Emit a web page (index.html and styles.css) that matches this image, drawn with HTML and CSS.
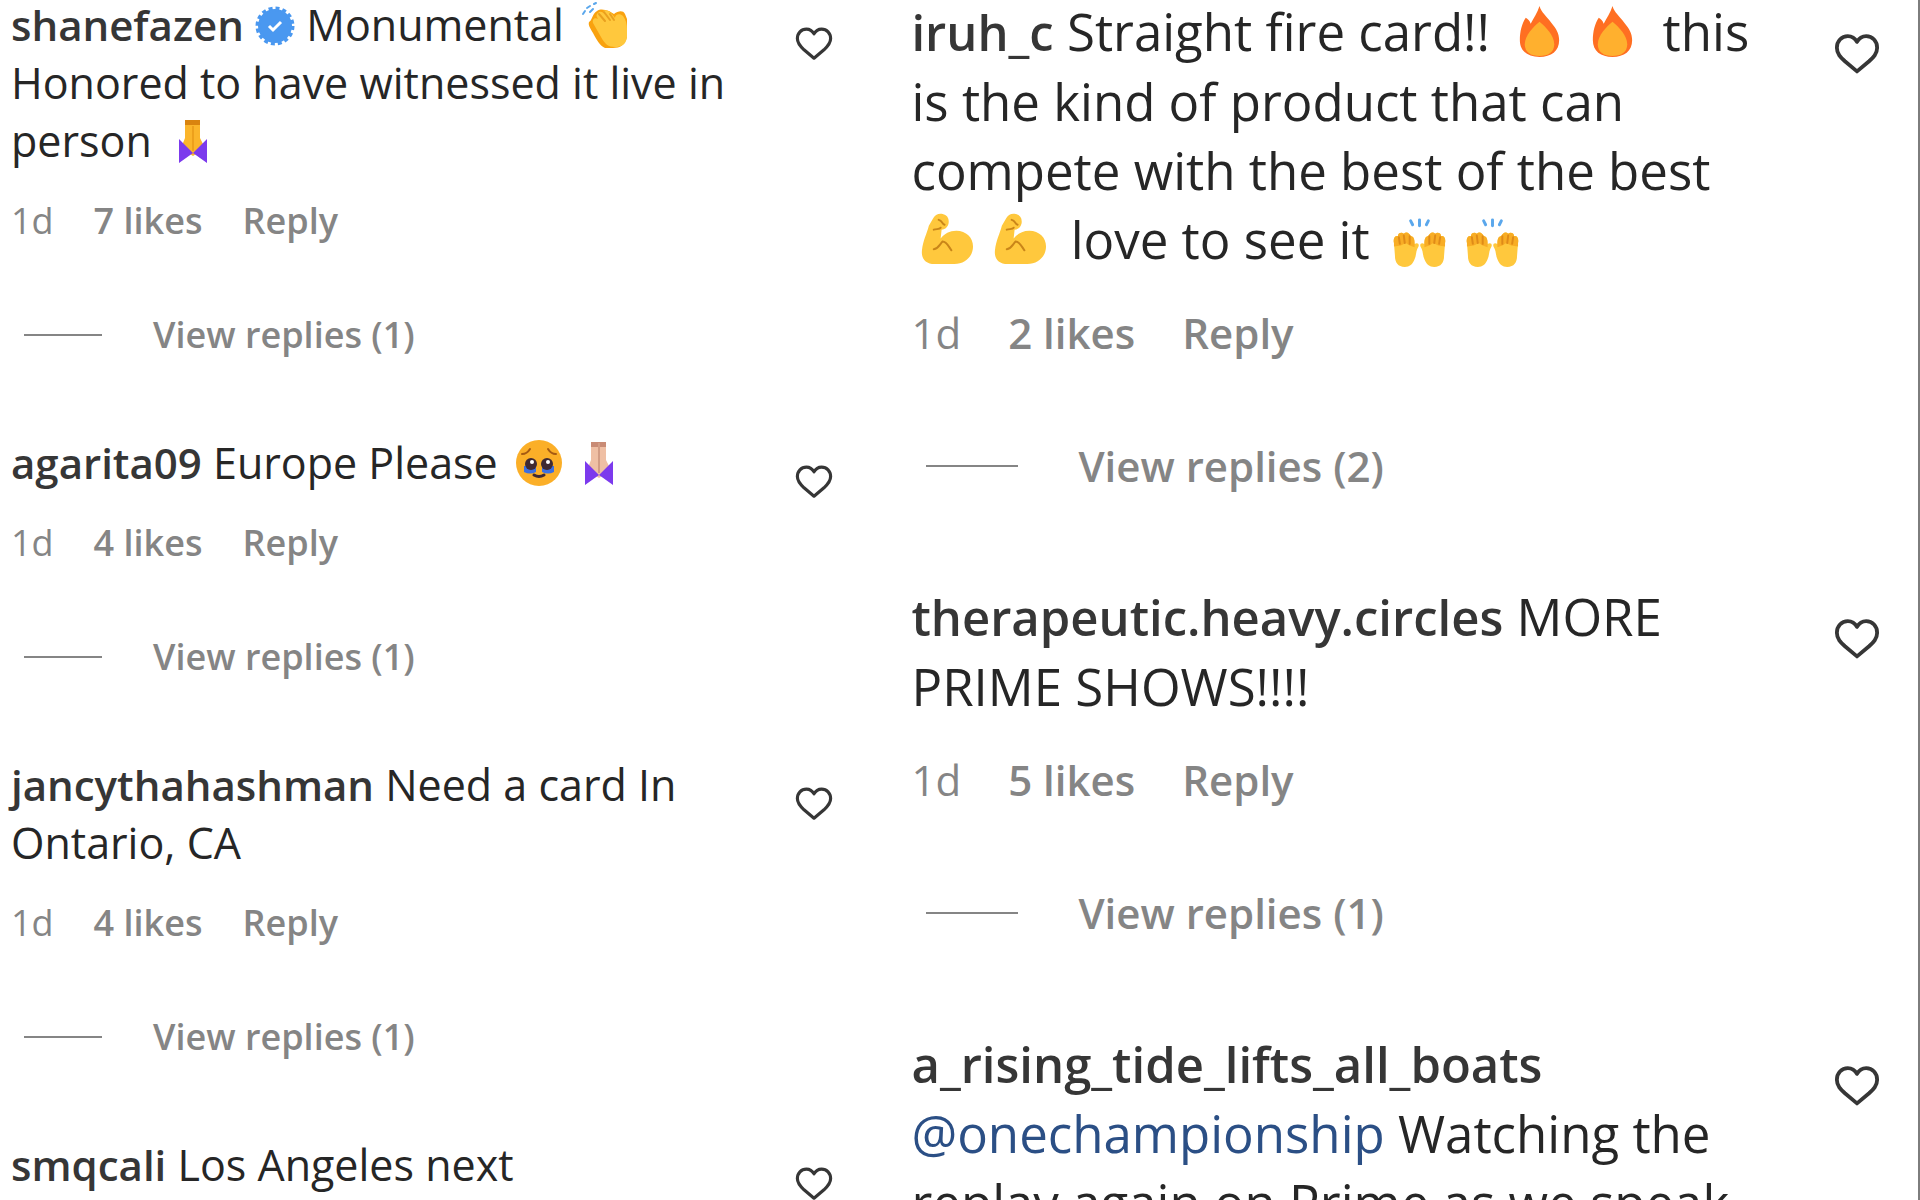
FILE: index.html
```html
<!DOCTYPE html>
<html lang="en">
<head>
  <meta charset="UTF-8">
  <meta name="viewport" content="width=device-width, initial-scale=1.0">
  <title>Comments</title>
  <link rel="stylesheet" href="styles.css">
</head>
<body>
  <!-- shared icons -->
  <svg class="sprite" aria-hidden="true">
    <symbol id="heart" viewBox="0 0 24 24">
      <path d="M16.8 3.2c-2.2 0-3.8 1.2-4.8 3-1-1.8-2.6-3-4.8-3C3.900 3.200 1.500 5.800 1.500 9.200c0 3.200 2 5.100 4.200 7.100l6.300 5.300 6.300-5.300c2.200-2 4.200-3.900 4.200-7.100 0-3.400-2.400-6-5.700-6z" fill="none" stroke="#363636" stroke-width="2" stroke-linejoin="round"/>
    </symbol>
    <symbol id="verified" viewBox="0 0 40 40">
      <circle cx="20" cy="20" r="17" fill="#4a98f0" stroke="#4a98f0" stroke-width="5" stroke-dasharray="3.8 2.875"/>
      <path d="M14 20l4 4 8-8" fill="none" stroke="#fff" stroke-width="3"/>
    </symbol>
    <symbol id="clap" viewBox="0 0 48 48">
      <path d="M2 13l2-3M6 7l3-2M9 11l3-3M13 3l2-1" stroke="#5aa7ec" stroke-width="2" stroke-linecap="round"/>
      <path d="M16 10c4-3 8-1 12 0l5 3c4-3 9-4 11 0l2 5v18c-2 8-7 11-14 11h-8c-5-2-9-9-12-15-3-5-5-8-4-11 3-1 3-8 8-11z" fill="#f9a20f"/>
      <path d="M17 12c3-3 5 0 8 2l-3-4c3-2 6 0 9 3l3 4c0-4 5-5 8-2 3 4 4 8 4 13v8c-1 8-6 10-12 10-7 0-10-3-14-10l-8-14c-1-4 2-6 5-4-2-3-2-5 0-6z" fill="#ffc83d"/>
      <path d="M18 13l6 7M23 11l6 8M29 13l4 6" fill="none" stroke="#e9a01f" stroke-width="2" stroke-linecap="round"/>
    </symbol>
    <symbol id="pray" viewBox="0 0 48 48">
      <path d="M16 3h15v18l5 10-12 8-12-8 4-10z" fill="#fbb52b"/>
      <path d="M16 3h15v5H16z" fill="#d9840f"/>
      <path d="M24 9v25" stroke="#eda01c" stroke-width="2"/>
      <path d="M10 22l14 14 14-14v24L24 36 10 46z" fill="#7c3aed"/>
    </symbol>
    <symbol id="pray-light" viewBox="0 0 48 48">
      <path d="M16 3h15v18l5 10-12 8-12-8 4-10z" fill="#efbfa4"/>
      <path d="M16 3h15v5H16z" fill="#c98b75"/>
      <path d="M24 4v30" stroke="#d29c84" stroke-width="2"/>
      <path d="M10 22l14 14 14-14v24L24 36 10 46z" fill="#7c3aed"/>
    </symbol>
    <symbol id="tears" viewBox="0 0 48 48">
      <circle cx="24" cy="24" r="23" fill="#fbaf28"/>
      <path d="M7 15q5 0 8-5M41 15q-5 0-8-5" fill="none" stroke="#a55a12" stroke-width="2" stroke-linecap="round"/>
      <path d="M9 27h12v6c-4 2-8 2-12 0zM27 27h12v6c-4 2-8 2-12 0z" fill="#3c6fe0"/>
      <circle cx="16" cy="25" r="6" fill="#402a32"/>
      <circle cx="32" cy="25" r="6" fill="#402a32"/>
      <circle cx="17" cy="23" r="2" fill="#fff"/>
      <circle cx="33" cy="23" r="2" fill="#fff"/>
      <path d="M19 36q5 3 10 0" fill="none" stroke="#402a32" stroke-width="3" stroke-linecap="round"/>
    </symbol>
    <symbol id="fire" viewBox="0 0 56 56">
      <path d="M28 2c2 7 7 10 12 17 5 6 8 11 8 18 0 11-8 17-20 17S8 48 8 37c0-9 2-17 6-23 2 1 4 3 5 6 3-6 7-11 9-18z" fill="#ff6f22"/>
      <path d="M28 18c6 5 15 14 15 23 0 8-6 12-15 12s-15-4-15-12c0-9 9-18 15-23z" fill="#ffb02e"/>
    </symbol>
    <symbol id="muscle" viewBox="0 0 56 56">
      <path d="M13 7c2-4 6-6 10-5 5 1 7 5 6 10-1 4-4 6-7 6l-1 9c4-5 9-8 16-8 10 0 17 7 17 16 0 10-8 18-19 18H15C6 53 1 48 2 39c1-10 5-17 7-25z" fill="#ffc83d"/>
      <path d="M14 18c3-1 6 0 7-2M19 8c4 1 3 4 6 5M14 38c5-1 6-5 9-8 4 0 6 5 9 9" fill="none" stroke="#c98519" stroke-width="2" stroke-linecap="round"/>
    </symbol>
    <symbol id="raise" viewBox="0 0 56 56">
      <path d="M19 9l2 4M28 8v6M37 9l-2 4" stroke="#5aa7ec" stroke-width="3" stroke-linecap="round"/>
      <g transform="translate(0 9) scale(1 .87)">
        <path d="M2 26c-1-5 1-9 4-8 0-4 4-5 6-3 3-3 6 0 7 3 3 0 4 3 4 9 3-2 5 0 4 3-3 5-2 10-4 15-2 6-5 9-10 9-7 0-10-5-10-13z" fill="#ffc83d"/>
        <path d="M2 26c-1-5 1-9 4-8 0-4 4-5 6-3 3-3 6 0 7 3 3 0 4 3 4 9v4l-5-2-4-3-5 3-7 1z" fill="#f8ad25"/>
        <path d="M7 19l1 8M12 17l1 9M18 18v9" stroke="#df8b18" stroke-width="2" stroke-linecap="round"/>
        <path d="M54 26c1-5-1-9-4-8 0-4-4-5-6-3-3-3-6 0-7 3-3 0-4 3-4 9-3-2-5 0-4 3 3 5 2 10 4 15 2 6 5 9 10 9 7 0 10-5 10-13z" fill="#ffc83d"/>
        <path d="M54 26c1-5-1-9-4-8 0-4-4-5-6-3-3-3-6 0-7 3-3 0-4 3-4 9v4l5-2 4-3 5 3 7 1z" fill="#f8ad25"/>
        <path d="M49 19l-1 8M44 17l-1 9M38 18v9" stroke="#df8b18" stroke-width="2" stroke-linecap="round"/>
      </g>
    </symbol>
  </svg>

  <main class="page">
    <section class="thread thread-small">
      <article class="comment">
        <div class="comment-top">
          <p class="comment-text"><a class="user" href="#">shanefazen</a> <svg class="badge" role="img" aria-label="Verified"><use href="#verified"/></svg> Monumental <svg class="emoji"><use href="#clap"/></svg> Honored to have witnessed it live in person <svg class="emoji"><use href="#pray"/></svg></p>
          <button class="like" aria-label="Like"><svg><use href="#heart"/></svg></button>
        </div>
        <div class="meta"><span class="time">1d</span><button>7 likes</button><button>Reply</button></div>
        <button class="replies">View replies (1)</button>
      </article>

      <article class="comment">
        <div class="comment-top">
          <p class="comment-text"><a class="user" href="#">agarita09</a> Europe Please <svg class="emoji"><use href="#tears"/></svg><svg class="emoji"><use href="#pray-light"/></svg></p>
          <button class="like" aria-label="Like"><svg><use href="#heart"/></svg></button>
        </div>
        <div class="meta"><span class="time">1d</span><button>4 likes</button><button>Reply</button></div>
        <button class="replies">View replies (1)</button>
      </article>

      <article class="comment">
        <div class="comment-top">
          <p class="comment-text"><a class="user" href="#">jancythahashman</a> Need a card In Ontario, CA</p>
          <button class="like" aria-label="Like"><svg><use href="#heart"/></svg></button>
        </div>
        <div class="meta"><span class="time">1d</span><button>4 likes</button><button>Reply</button></div>
        <button class="replies">View replies (1)</button>
      </article>

      <article class="comment">
        <div class="comment-top">
          <p class="comment-text"><a class="user" href="#">smqcali</a> Los Angeles next</p>
          <button class="like" aria-label="Like"><svg><use href="#heart"/></svg></button>
        </div>
      </article>
    </section>

    <section class="thread thread-large">
      <article class="comment">
        <div class="comment-top">
          <p class="comment-text"><a class="user" href="#">iruh_c</a> Straight fire card!! <svg class="emoji"><use href="#fire"/></svg><svg class="emoji"><use href="#fire"/></svg> this is the kind of product that can compete with the best of the best <svg class="emoji"><use href="#muscle"/></svg><svg class="emoji"><use href="#muscle"/></svg> love to see it <svg class="emoji"><use href="#raise"/></svg><svg class="emoji"><use href="#raise"/></svg></p>
          <button class="like" aria-label="Like"><svg><use href="#heart"/></svg></button>
        </div>
        <div class="meta"><span class="time">1d</span><button>2 likes</button><button>Reply</button></div>
        <button class="replies">View replies (2)</button>
      </article>

      <article class="comment">
        <div class="comment-top">
          <p class="comment-text"><a class="user" href="#">therapeutic.heavy.circles</a> MORE PRIME SHOWS!!!!</p>
          <button class="like" aria-label="Like"><svg><use href="#heart"/></svg></button>
        </div>
        <div class="meta"><span class="time">1d</span><button>5 likes</button><button>Reply</button></div>
        <button class="replies">View replies (1)</button>
      </article>

      <article class="comment">
        <div class="comment-top">
          <p class="comment-text"><a class="user" href="#">a_rising_tide_lifts_all_boats</a> <a class="mention" href="#">@onechampionship</a> Watching the replay again on Prime as we speak</p>
          <button class="like" aria-label="Like"><svg><use href="#heart"/></svg></button>
        </div>
      </article>
    </section>
  </main>
</body>
</html>
```
FILE: styles.css
```css
* {
  box-sizing: border-box;
}
body {
  margin: 0;
  background-color: #fff;
  color: #262626;
  font-family: "Segoe UI", "Open Sans", sans-serif;
}
.sprite {
  display: none;
}
.page {
  display: grid;
  grid-template-columns: 47fr 53fr;
  height: 100vh;
  overflow: hidden;
  border-right: 2px solid #7d7d7d;
}
.thread {
  display: flex;
  flex-direction: column;
}
.thread-small {
  --text: 43px;
  --user: 42px;
  --line: 58px;
  --meta: 36px;
  --meta-line: 46px;
  --meta-gap: 40px;
  --emoji: 48px;
  --emoji-gap: 6px;
  --heart: 38px;
  gap: 75px;
  margin-top: -4px;
  padding: 0 68px 0 11px;
}
.thread-large {
  --text: 51px;
  --user: 49px;
  --line: 69px;
  --meta: 42px;
  --meta-line: 54px;
  --meta-gap: 47px;
  --emoji: 55px;
  --emoji-gap: 9px;
  --heart: 46px;
  gap: 89px;
  margin-top: -3px;
  padding: 0 38px 0 10px;
}
.comment-top {
  display: flex;
  justify-content: space-between;
  align-items: flex-start;
  gap: 64px;
}
.comment-text {
  flex: 1;
  margin: 0;
  font-size: var(--text);
  line-height: var(--line);
}
.user {
  color: #363636;
  font-size: var(--user);
  font-weight: 600;
  text-decoration: none;
}
.mention {
  color: #2b4f85;
  text-decoration: none;
}
.badge {
  width: 40px;
  height: 40px;
  vertical-align: -5px;
}
.emoji {
  width: var(--emoji);
  height: var(--emoji);
  margin: 0 var(--emoji-gap);
  vertical-align: -8px;
}
button {
  padding: 0;
  border: none;
  background: none;
  color: #858585;
  font: inherit;
  font-weight: 600;
  cursor: pointer;
}
.like {
  display: flex;
  margin: 28px 0 -10px;
}
.like svg {
  width: var(--heart);
  height: var(--heart);
}
.meta {
  display: flex;
  gap: var(--meta-gap);
  margin-top: 28px;
  color: #858585;
  font-size: var(--meta);
  line-height: var(--meta-line);
}
.replies {
  display: flex;
  align-items: center;
  gap: 51px;
  margin: 68px 0 0 13px;
  font-size: var(--meta);
  line-height: var(--meta-line);
}
.replies::before {
  content: "";
  width: 78px;
  height: 2px;
  background-color: #858585;
}
.thread-small .comment + .comment {
  margin-top: 1px;
}
.thread-large .like {
  margin-top: 33px;
}
.thread-large .meta {
  margin-top: 32px;
}
.thread-large .replies {
  gap: 60px;
  margin: 79px 0 0 15px;
}
.thread-large .replies::before {
  width: 92px;
}
```
